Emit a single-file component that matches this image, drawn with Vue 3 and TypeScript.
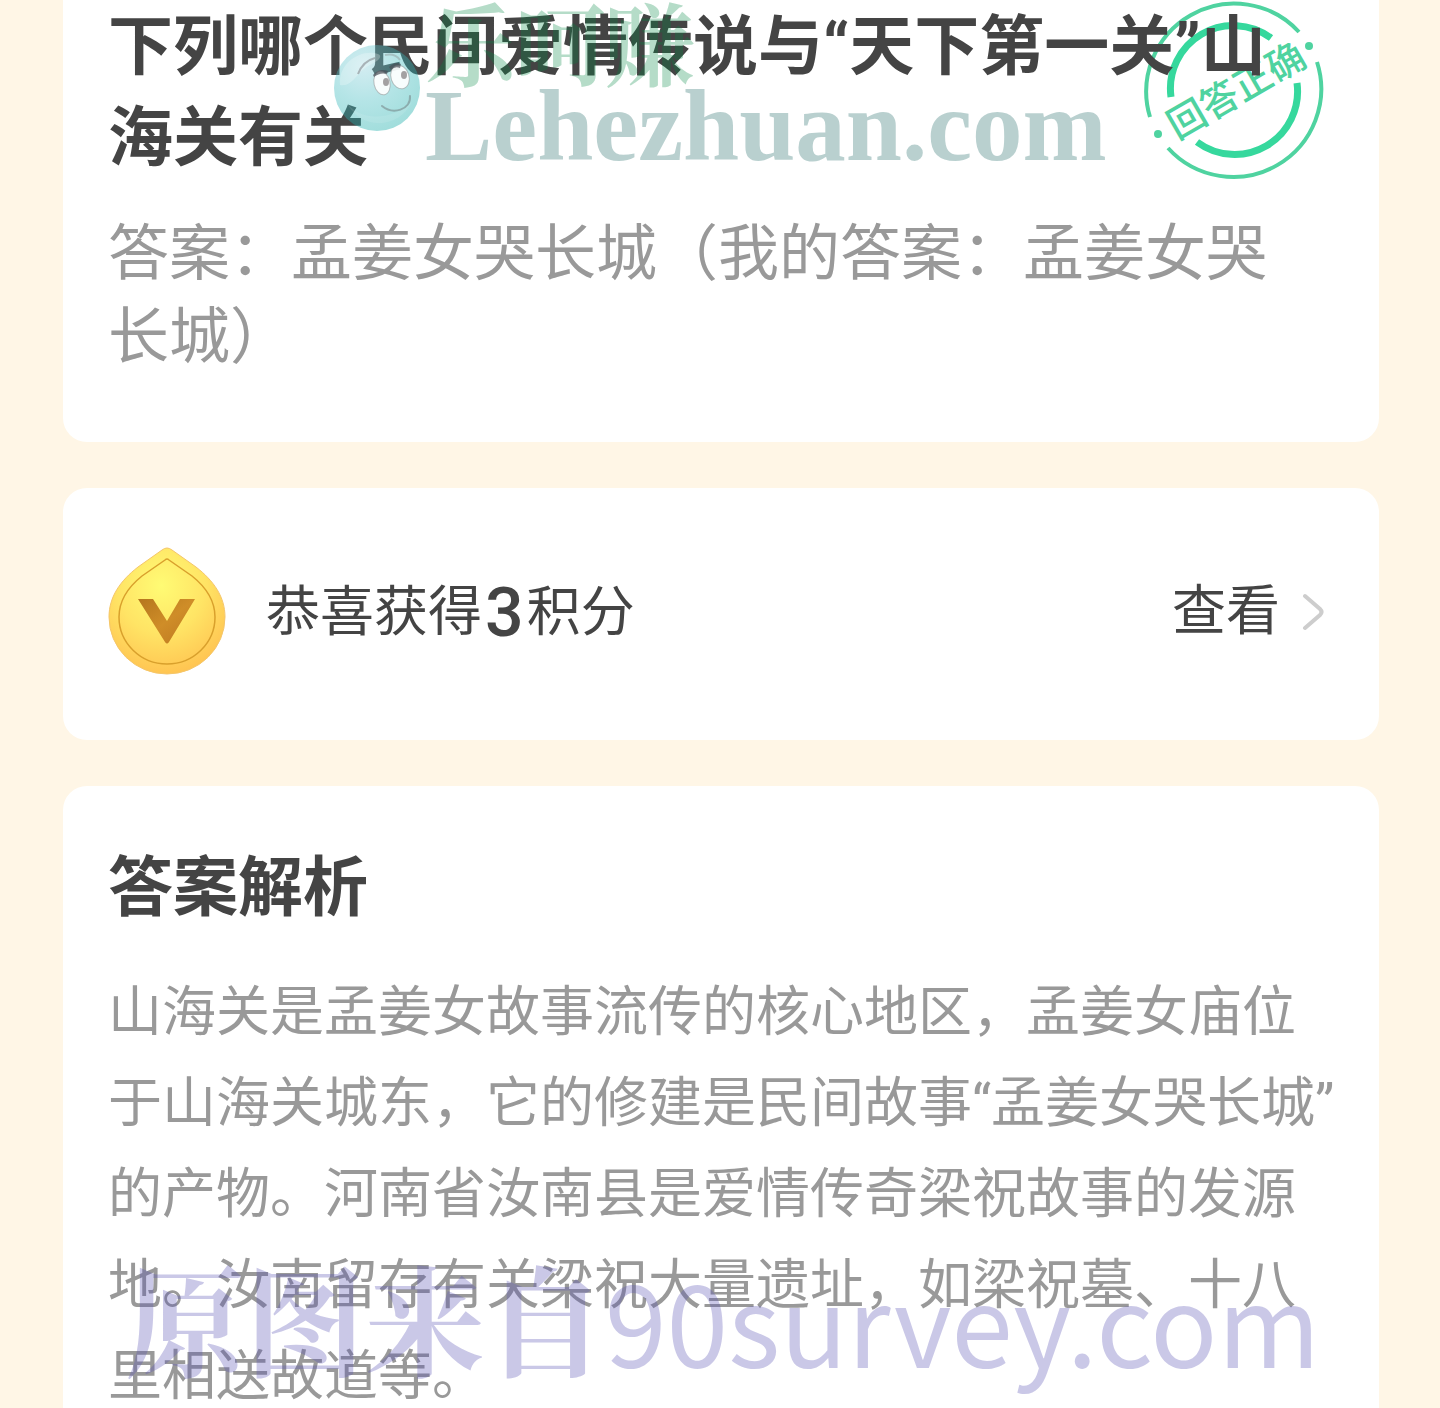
<script setup lang="ts">
const question: string = '下列哪个民间爱情传说与“天下第一关”山海关有关'
const answer: string = '孟姜女哭长城'
const myAnswer: string = '孟姜女哭长城'
const points: number = 3
// A zero-width space lets the line break after the closing quote.
const analysis: string =
  '山海关是孟姜女故事流传的核心地区，孟姜女庙位于山海关城东，它的修建是民间故事“孟姜女哭长城”\u200b的产物。河南省汝南县是爱情传奇梁祝故事的发源地。汝南留存有关梁祝大量遗址，如梁祝墓、十八里相送故道等。'
</script>

<template>
  <main class="page">
    <section class="card question">
      <svg class="stamp" viewBox="0 0 180 180" role="img" aria-label="回答正确">
        <g fill="none" stroke-linecap="butt">
          <path d="M6 117A88 88 0 0 1 155 32" stroke="#4fd3a0" stroke-width="4" />
          <path d="M173 62A88 88 0 0 1 24 148" stroke="#4fd3a0" stroke-width="4" />
          <path d="M27 97A63 63 0 0 1 127 38" stroke="#36d89d" stroke-width="7" />
          <path d="M153 83A63 63 0 0 1 53 142" stroke="#36d89d" stroke-width="7" />
        </g>
        <circle cx="165" cy="46" r="4" fill="#4fd3a0" />
        <circle cx="14" cy="134" r="4" fill="#4fd3a0" />
        <text class="stamp-text" x="92" y="104" text-anchor="middle" transform="rotate(-30 92 90)">回答正确</text>
      </svg>
      <h1 class="title">{{ question }}</h1>
      <p class="answer">答案：{{ answer }}（我的答案：{{ myAnswer }}）</p>
    </section>

    <section class="card reward">
      <svg class="coin" viewBox="0 0 118 128" aria-hidden="true">
        <defs>
          <radialGradient id="coin-face" cx="0.45" cy="0.3" r="0.75">
            <stop offset="0" stop-color="#fffb74" />
            <stop offset="0.5" stop-color="#ffe465" />
            <stop offset="1" stop-color="#ffc04f" />
          </radialGradient>
          <linearGradient id="coin-mark" x1="0" y1="0" x2="1" y2="1">
            <stop offset="0" stop-color="#b5761d" />
            <stop offset="0.5" stop-color="#cf8d28" />
            <stop offset="1" stop-color="#bd7820" />
          </linearGradient>
        </defs>
        <path
          d="M54 3Q59 -1 64 3L88 20C106 34 117 50 117 70A58 57 0 0 1 1 70C1 50 12 34 30 20Z"
          fill="url(#coin-face)"
          stroke="#f5c66a"
          stroke-width="1"
        />
        <path
          d="M57 13Q59 11 61 13L84 29C99 41 107 54 107 70A48 47 0 0 1 11 70C11 54 19 41 34 29Z"
          fill="none"
          stroke="#d9a02c"
          stroke-width="1.5"
        />
        <path d="M30 52H45L59 74L72 52H87L61 95Q59 98 57 95Z" fill="url(#coin-mark)" />
      </svg>
      <p class="reward-text">恭喜获得<strong class="points">{{ points }}</strong>积分</p>
      <a class="view" href="#">
        查看
        <svg class="chevron" viewBox="0 0 22 38" aria-hidden="true">
          <path d="M3 3L18 16Q21 19 18 22L3 35" fill="none" stroke="#cdcdcd" stroke-width="4" stroke-linecap="round" />
        </svg>
      </a>
    </section>

    <section class="card analysis">
      <h2 class="title">答案解析</h2>
      <p class="analysis-text">{{ analysis }}</p>
    </section>

    <div class="mark-top" aria-hidden="true">
      <svg class="face" viewBox="0 0 88 88">
        <defs>
          <radialGradient id="ball" cx="0.35" cy="0.25" r="0.8">
            <stop offset="0" stop-color="#8fd0dc" stop-opacity="0.4" />
            <stop offset="0.5" stop-color="#45bdc2" stop-opacity="0.4" />
            <stop offset="1" stop-color="#12aaa6" stop-opacity="0.4" />
          </radialGradient>
        </defs>
        <circle cx="44" cy="44" r="43" fill="url(#ball)" />
        <path d="M7 41C5 21 24 7 41 9C54 11 44 18 35 22C23 29 20 43 7 41Z" fill="#fff" fill-opacity="0.25" />
        <path d="M12 56C25 79 61 76 79 58C66 85 27 88 12 56Z" fill="#fff" fill-opacity="0.1" />
        <ellipse cx="49" cy="39" rx="8" ry="12" transform="rotate(-12 49 39)" fill="#fff" fill-opacity="0.9" stroke="#999" stroke-opacity="0.6" />
        <ellipse cx="67" cy="33" rx="9" ry="12" transform="rotate(-18 67 33)" fill="#fff" fill-opacity="0.9" stroke="#999" stroke-opacity="0.6" />
        <ellipse cx="53" cy="38" rx="3" ry="4" fill="#8d898b" fill-opacity="0.8" />
        <ellipse cx="71" cy="31" rx="3" ry="4" fill="#8d898b" fill-opacity="0.8" />
        <path d="M40 31Q46 24 55 27L54 30Q47 28 41 33Z" fill="#4a5058" fill-opacity="0.7" />
        <path d="M56 23Q62 17 68 20L67 24Q62 22 58 26Z" fill="#4a5058" fill-opacity="0.7" />
        <path d="M25 30Q30 17 42 14" fill="none" stroke="#878b8f" stroke-opacity="0.6" stroke-width="2" />
        <path d="M52 11Q62 9 67 16" fill="none" stroke="#878b8f" stroke-opacity="0.4" stroke-width="2" />
        <path d="M49 62C60 71 78 66 77 52" fill="none" stroke="#7a8a8c" stroke-opacity="0.6" stroke-width="2" stroke-linecap="round" />
      </svg>
      <div class="brand">
        <span class="brand-cn">乐呵赚</span>
        <span class="brand-en">Lehezhuan.com</span>
      </div>
    </div>
    <div class="mark-bottom" aria-hidden="true">原图来自<span class="mark-site">90survey.com</span></div>
  </main>
</template>

<style>
body {
  margin: 0;
  background: #fff6e6;
}
</style>

<style scoped>
.page {
  position: relative;
  display: flex;
  flex-direction: column;
  gap: 46px;
  height: 100vh;
  overflow: hidden;
  box-sizing: border-box;
  padding: 0 61px 0 63px;
  background: #fff6e6;
  color: #444;
  font-family: Roboto, "Noto Sans CJK SC", sans-serif;
}

.card {
  position: relative;
  flex: none;
  box-sizing: border-box;
  border-radius: 24px;
  background: #fff;
}

.question {
  padding: 2px 60px 63px 45px;
  border-radius: 0 0 24px 24px;
}

.title {
  position: relative;
  margin: 0;
  font-size: 65px;
  font-weight: 700;
  line-height: 91px;
}

.answer {
  margin: 29px 0 0;
  color: #999;
  font-size: 61px;
  line-height: 83px;
}

.stamp {
  position: absolute;
  top: 0;
  right: 55px;
  width: 180px;
  height: 180px;
}

.stamp-text {
  fill: #4fd3a0;
  font-size: 38px;
  font-weight: 500;
}

.reward {
  display: flex;
  align-items: center;
  padding: 59px 55px 65px 45px;
}

.coin {
  width: 118px;
  height: 128px;
}

.reward-text {
  display: flex;
  flex: 1;
  align-items: center;
  margin: 0 0 0 40px;
  padding-top: 4px;
  font-size: 54px;
  line-height: 80px;
}

.points {
  margin: 0 3px;
  font-size: 68px;
  font-weight: 500;
}

.view {
  display: flex;
  align-items: center;
  gap: 22px;
  padding-top: 2px;
  color: inherit;
  font-size: 54px;
  line-height: 80px;
  text-decoration: none;
}

.chevron {
  width: 22px;
  height: 38px;
}

.analysis {
  padding: 57px 36px 65px 45px;
}

.analysis-text {
  margin: 33px 0 0;
  color: #999;
  font-size: 54px;
  line-height: 91px;
}

.mark-top {
  position: absolute;
  top: 0;
  left: 333px;
  display: flex;
  align-items: flex-start;
  gap: 4px;
  pointer-events: none;
}

.face {
  width: 88px;
  height: 88px;
  margin-top: 44px;
}

.brand {
  display: flex;
  flex-direction: column;
  white-space: nowrap;
}

.brand-cn {
  color: rgba(0, 134, 65, 0.29);
  font-family: "Noto Serif CJK SC", "Noto Sans CJK SC", serif;
  font-size: 90px;
  font-weight: 700;
  line-height: 81px;
}

.brand-en {
  color: rgba(14, 93, 90, 0.29);
  font-family: "Liberation Serif", serif;
  font-size: 101px;
  font-weight: 700;
  line-height: 90px;
}

.mark-bottom {
  position: absolute;
  top: 1256px;
  left: 125px;
  color: rgba(90, 84, 180, 0.32);
  font-family: "Noto Serif CJK SC", "Noto Sans CJK SC", serif;
  font-size: 120px;
  font-weight: 700;
  line-height: 120px;
  white-space: nowrap;
  pointer-events: none;
}

.mark-site {
  font-family: "Noto Sans CJK SC", sans-serif;
  font-size: 111px;
  font-weight: 400;
}
</style>
